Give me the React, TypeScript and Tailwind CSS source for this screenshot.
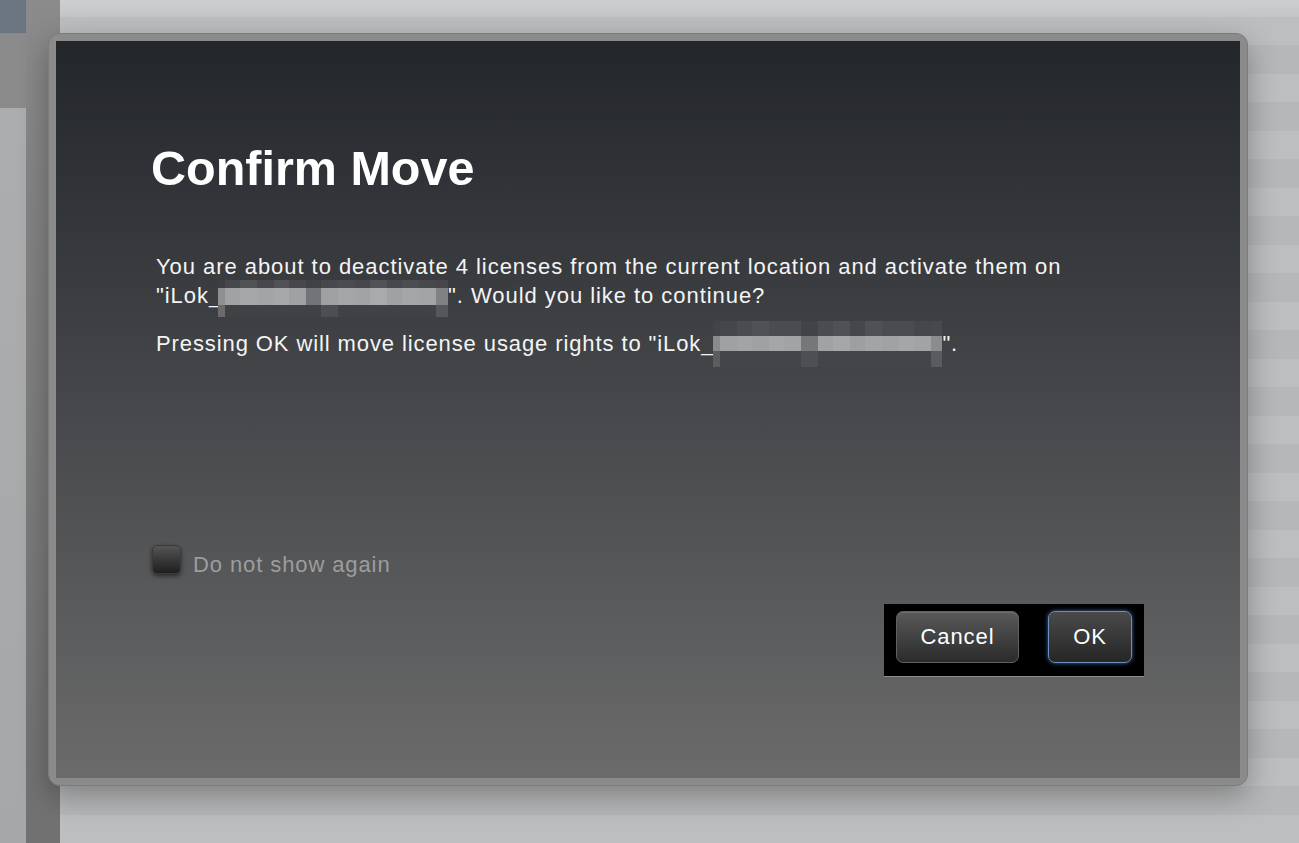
import React from "react";

type MosaicSpec = {
  widths: number[];
  top: string[];
  main: string[];
  bottom: string[];
  heights: [number, number, number];
};

const mosaic1: MosaicSpec = {
  widths: [7, 15, 17, 17, 15, 17, 15, 17, 17, 15, 17, 15, 17, 17, 12],
  heights: [8, 17, 12],
  top: ["#3d3f43", "#46484c", "#505256", "#46484c", "#505256", "#46484c", "#3f4145", "#46484c", "#4a4c50", "#46484c", "#505256", "#46484c", "#4b4d51", "#46484c", "#44464a"],
  main: ["#8e8f91", "#a1a2a3", "#a6a7a8", "#a3a4a5", "#a7a8a9", "#a0a1a2", "#737477", "#9fa0a1", "#a4a5a6", "#a2a3a4", "#a9aaab", "#a0a1a2", "#a5a6a7", "#a3a4a5", "#808183"],
  bottom: ["#6a6b6d", "#404246", "#404246", "#404246", "#404246", "#404246", "#404246", "#4c4e52", "#404246", "#404246", "#404246", "#404246", "#404246", "#404246", "#56575a"],
};

const mosaic2: MosaicSpec = {
  widths: [7, 17, 15, 17, 15, 17, 17, 15, 17, 15, 17, 17, 15, 17, 11],
  heights: [15, 15, 16],
  top: ["#414347", "#444649", "#4a4c50", "#4f5155", "#4a4c50", "#4a4c50", "#414347", "#4a4c50", "#4f5155", "#45474b", "#4f5155", "#4a4c50", "#4a4c50", "#45474b", "#47494d"],
  main: ["#8a8b8d", "#9fa0a1", "#a3a4a5", "#a0a1a2", "#a5a6a7", "#a2a3a4", "#767779", "#a1a2a3", "#a6a7a8", "#9e9fa0", "#a3a4a5", "#a1a2a3", "#a5a6a7", "#a2a3a4", "#8b8c8e"],
  bottom: ["#5c5d60", "#434549", "#434549", "#434549", "#434549", "#434549", "#4d4f52", "#434549", "#434549", "#434549", "#434549", "#434549", "#434549", "#434549", "#5a5b5e"],
};

function Mosaic({ spec, variant }: { spec: MosaicSpec; variant: 1 | 2 }) {
  const rows: [string[], number][] = [
    [spec.top, spec.heights[0]],
    [spec.main, spec.heights[1]],
    [spec.bottom, spec.heights[2]],
  ];
  return (
    <span
      className={
        variant === 1
          ? "inline-block overflow-hidden align-baseline -ml-[4px] -mt-[10px] -mb-[14px]"
          : "inline-block overflow-hidden align-baseline -ml-[1px] -mt-[21px] -mb-[16px]"
      }
      aria-hidden
    >
      {rows.map(([colors, h], r) => (
        <span key={r} className="flex">
          {colors.map((c, i) => (
            <span key={i} style={{ width: spec.widths[i], height: h, background: c }} />
          ))}
        </span>
      ))}
    </span>
  );
}

const stripes = Array.from({ length: 29 }, (_, i) => i);

export default function App() {
  return (
    <div className="relative w-[1299px] h-[843px] overflow-hidden flex font-['Liberation_Sans',Arial,sans-serif]">
      {/* background app (dimmed) */}
      <div className="w-[26px] flex flex-col">
        <div className="h-[33px] bg-[#6b7481]" />
        <div className="h-[75px] bg-[#8b8b8b]" />
        <div className="flex-1 bg-gradient-to-b from-[#acadae] to-[#a6a7a8]" />
      </div>
      <div className="w-[34px] bg-gradient-to-b from-[#8b8b8b] to-[#717171]" />
      <div className="flex-1 flex flex-col">
        <div className="h-[33px] bg-gradient-to-b from-[#cdcecf] to-[#c4c5c6]" />
        {stripes.map((i) => (
          <div key={i} className={i % 2 === 0 ? "h-[28.5px] shrink-0 bg-[#bdbebf]" : "h-[28.5px] shrink-0 bg-[#b6b7b8]"} />
        ))}
      </div>

      {/* modal dialog */}
      <div className="absolute left-[48px] top-[33px] w-[1200px] h-[753px] rounded-[12px] bg-[#8b8b8b] border border-[#7c7c7c] p-[7px] shadow-[0_10px_30px_rgba(0,0,0,0.3)] flex">
        <div className="flex-1 flex flex-col bg-gradient-to-b from-[#23262b] via-[#46484b] to-[#6b6b6b] pl-[100px] pt-[103px] pb-[101px] text-[#f4f4f4]">
          <h1 className="-ml-[5px] text-[48.5px] leading-[48px] font-bold text-white">Confirm Move</h1>

          <p className="mt-[60px] text-[22px] leading-[29px] tracking-[0.95px]">
            You are about to deactivate 4 licenses from the current location and activate them on
            <br />
            "iLok_<Mosaic spec={mosaic1} variant={1} />". Would you like to continue?
          </p>
          <p className="mt-[19px] text-[22px] leading-[29px] tracking-[0.9px]">
            Pressing OK will move license usage rights to "iLok_<Mosaic spec={mosaic2} variant={2} />".
          </p>

          <div className="flex-1" />

          <div className="flex items-start -ml-[4px]">
            <div className="w-[29px] h-[29px] rounded-[5px] bg-gradient-to-b from-[#555555] to-[#1f1f1f] border border-[#3a3a3a] shadow-[0_2px_4px_rgba(0,0,0,0.55)]" />
            <span className="ml-[12px] mt-[5px] text-[22px] leading-[29px] tracking-[0.9px] text-[#9d9d9d]">
              Do not show again
            </span>
          </div>

          <div className="mt-[25px] flex justify-end pr-[96px]">
            <div className="w-[260px] h-[73px] bg-black border-b border-[#8e8e8e] flex items-start pl-[12px] pt-[7px]">
              <button className="w-[123px] h-[52px] rounded-[7px] bg-gradient-to-b from-[#5a5a5a] to-[#2b2b2b] border border-[#606060] shadow-[inset_0_1px_0_rgba(255,255,255,0.12)] text-white text-[22px] tracking-[0.9px] leading-none flex items-center justify-center">
                Cancel
              </button>
              <button className="ml-[29px] w-[84px] h-[52px] rounded-[7px] bg-gradient-to-b from-[#4a4a4a] to-[#262626] border border-[#6b90bd] shadow-[0_0_4px_rgba(90,134,192,0.8)] text-white text-[22px] tracking-[0.9px] leading-none flex items-center justify-center">
                OK
              </button>
            </div>
          </div>
        </div>
      </div>
    </div>
  );
}
